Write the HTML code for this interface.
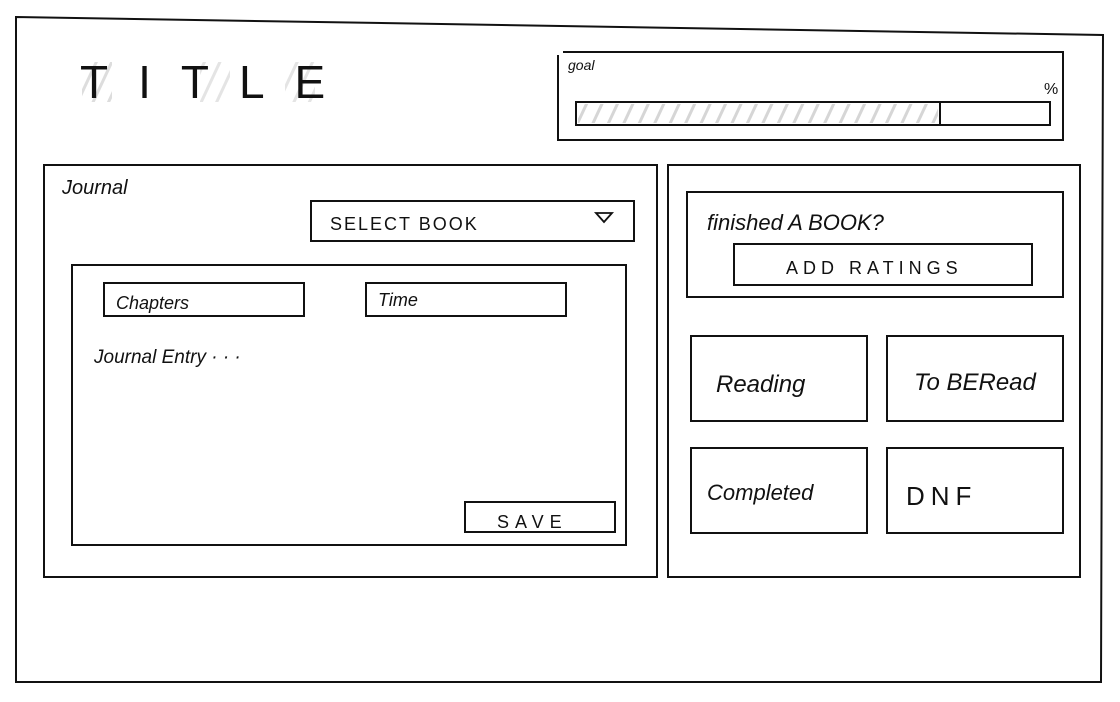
<!DOCTYPE html>
<html><head><meta charset="utf-8"><style>
html,body{margin:0;padding:0;background:#fff;width:1120px;height:702px;overflow:hidden}
svg{display:block}
text{font-family:"Liberation Sans",sans-serif;fill:#111}
</style></head><body>
<svg width="1120" height="702" viewBox="0 0 1120 702">
<defs>
<pattern id="h" width="14" height="12" patternUnits="userSpaceOnUse" patternTransform="rotate(25)">
<rect width="3" height="12" fill="#bbb"/>
</pattern>
</defs>
<g fill="none" stroke="#111" stroke-width="2">
<path d="M16 17 L1103 35 L1101 682 L16 682 Z"/>
<path d="M563 52 H1063 V140 H558 V55"/>
<rect x="576" y="102" width="474" height="23"/>
<line x1="940" y1="102" x2="940" y2="125"/>
<rect x="44" y="165" width="613" height="412"/>
<rect x="311" y="201" width="323" height="40"/>
<rect x="72" y="265" width="554" height="280"/>
<rect x="104" y="283" width="200" height="33"/>
<rect x="366" y="283" width="200" height="33"/>
<rect x="465" y="502" width="150" height="30"/>
<rect x="668" y="165" width="412" height="412"/>
<rect x="687" y="192" width="376" height="105"/>
<rect x="734" y="244" width="298" height="41"/>
<rect x="691" y="336" width="176" height="85"/>
<rect x="887" y="336" width="176" height="85"/>
<rect x="691" y="448" width="176" height="85"/>
<rect x="887" y="448" width="176" height="85"/>
<path d="M596 213 L612 213 L604 222 Z" stroke-width="1.8"/>
</g>
<rect x="578" y="104" width="360" height="19" fill="url(#h)" opacity="0.6"/>
<rect x="82" y="62" width="30" height="40" fill="url(#h)" opacity="0.5"/>
<rect x="200" y="62" width="30" height="40" fill="url(#h)" opacity="0.4"/>
<rect x="285" y="62" width="30" height="40" fill="url(#h)" opacity="0.4"/>
<text x="80" y="98" font-size="46" letter-spacing="30" fill="#222">TITLE</text>
<text x="568" y="70" font-size="14" font-style="italic">goal</text>
<text x="1044" y="94" font-size="16">%</text>
<text x="62" y="194" font-size="20" font-style="italic">Journal</text>
<text x="330" y="230" font-size="18" letter-spacing="2">SELECT BOOK</text>
<text x="116" y="309" font-size="18" font-style="italic">Chapters</text>
<text x="378" y="306" font-size="18" font-style="italic">Time</text>
<text x="94" y="363" font-size="19" font-style="italic">Journal Entry · · ·</text>
<text x="497" y="528" font-size="18" letter-spacing="6">SAVE</text>
<text x="707" y="230" font-size="22" font-style="italic">finished A BOOK?</text>
<text x="786" y="274" font-size="18" letter-spacing="5">ADD RATINGS</text>
<text x="716" y="392" font-size="24" font-style="italic">Reading</text>
<text x="914" y="390" font-size="24" font-style="italic">To BERead</text>
<text x="707" y="500" font-size="22" font-style="italic">Completed</text>
<text x="906" y="505" font-size="26" letter-spacing="6">DNF</text>
</svg>
</body></html>
